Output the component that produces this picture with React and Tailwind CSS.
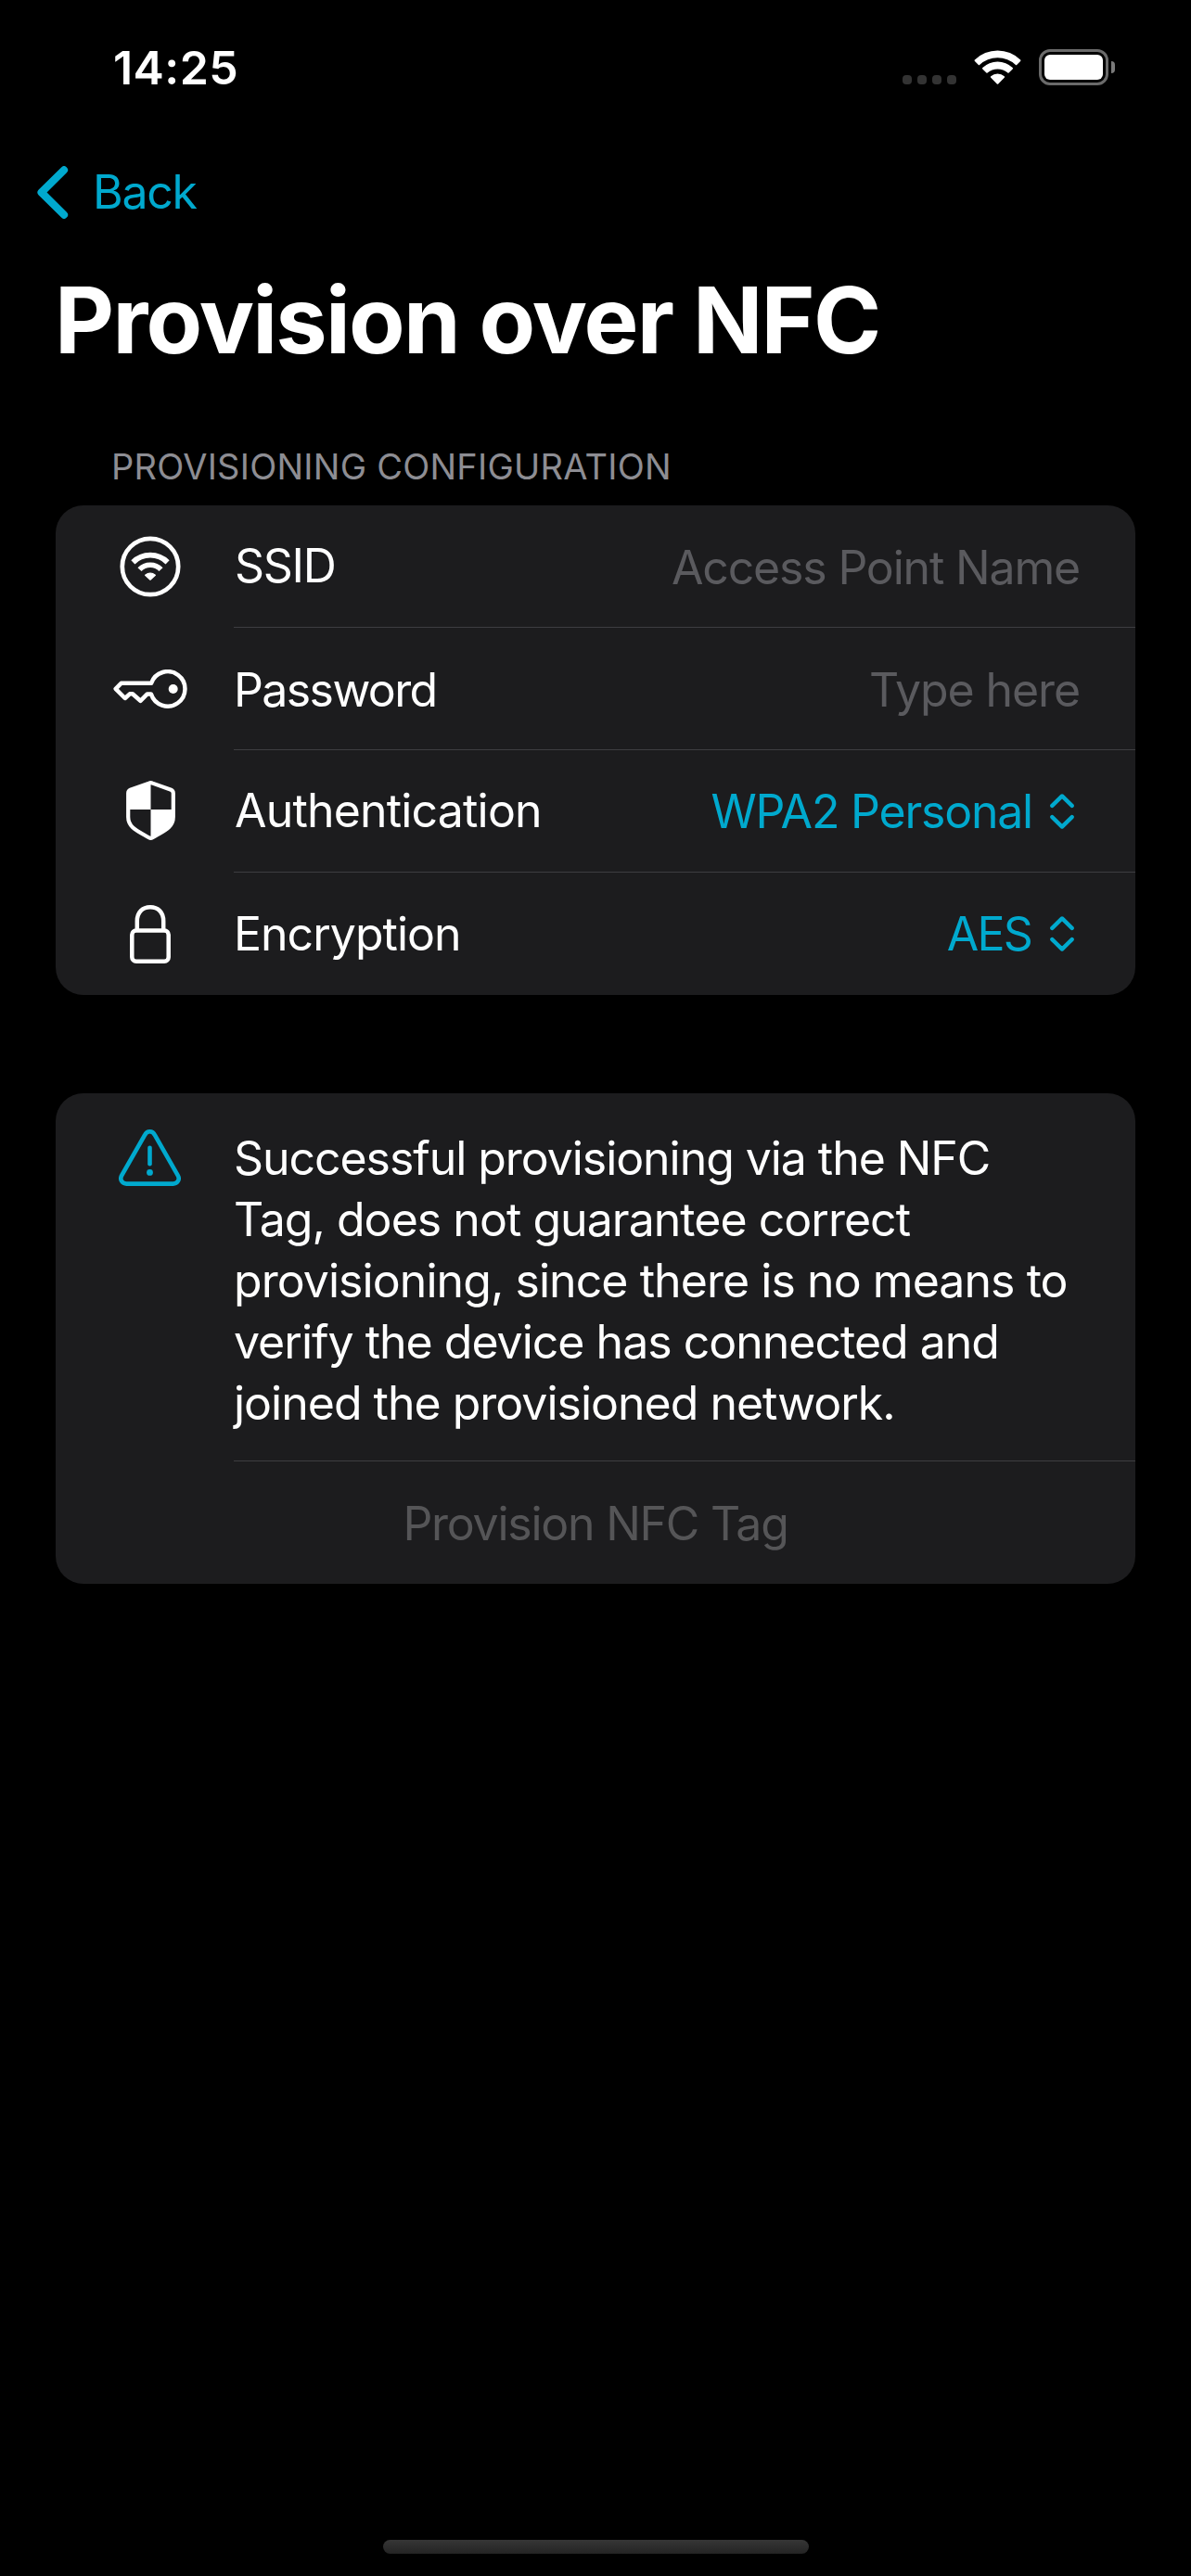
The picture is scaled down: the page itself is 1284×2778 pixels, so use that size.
import React from "react";

const CYAN = "#00a9ce";

function StatusBar() {
  return (
    <header className="flex h-[141px] shrink-0 pl-[122px] pr-[82px]">
      <div className="mt-[43px] h-[60px] text-[50px] font-semibold leading-[60px] tracking-[0.44px]">14:25</div>
      <div className="ml-auto mt-[53px] flex h-[39px]">
        <div className="mt-[28px] flex gap-[6px]">
          {[0, 1, 2, 3].map((i) => (
            <span key={i} className="size-[10px] rounded-[4px] bg-[#333333]" />
          ))}
        </div>
        <svg className="ml-[19px] mt-px h-[38px] w-[52px]" viewBox="0 0 52 38" fill="#fff">
          <path d="M0.9 10.5A35 35 0 0 1 50.1 10.5Q50.8 11.2 50.1 11.9L46.1 15.9Q45.6 16.4 45 15.9A28.6 28.6 0 0 0 6 15.9Q5.4 16.4 4.9 15.9L0.9 11.9Q0.2 11.2 0.9 10.5Z" />
          <path d="M9.3 19A23.5 23.5 0 0 1 41.7 19Q42.4 19.7 41.7 20.4L37.6 24.6Q37 25.1 36.4 24.6A16.5 16.5 0 0 0 14.6 24.6Q14 25.1 13.4 24.6L9.3 20.4Q8.6 19.7 9.3 19Z" />
          <path d="M18.2 28.3A11 11 0 0 1 32.8 28.3Q33.5 29 32.8 29.7L26.2 36.5Q25.5 37.1 24.8 36.5L18.2 29.7Q17.5 29 18.2 28.3Z" />
        </svg>
        <div className="ml-[18px] h-[39px] w-[75px] rounded-[12px] border-[3px] border-[#6a6a6a] p-[3px]">
          <div className="h-full w-full rounded-[6px] bg-white" />
        </div>
        <div className="ml-[3px] mt-[13px] h-[13px] w-[4px] rounded-r-full bg-[#7a7a7a]" />
      </div>
    </header>
  );
}

function WifiCircle() {
  return (
    <svg className="size-[66px]" viewBox="-33 -33 66 66" fill="none" stroke="#fff">
      <circle r="30.2" strokeWidth="4.7" />
      <path d="M-18.6 -4.6A26.3 26.3 0 0 1 18.6 -4.6" strokeWidth="5.8" />
      <path d="M-11.5 3.2A15.8 15.8 0 0 1 11.5 3.2" strokeWidth="5.6" />
      <path d="M-5.4 9.2Q0 4.8 5.4 9.2L0 14.2Z" fill="#fff" strokeWidth="1.2" strokeLinejoin="round" />
    </svg>
  );
}

function Key() {
  return (
    <svg className="h-[42px] w-[80px]" viewBox="0 0 80 42" fill="none" stroke="#fff" strokeWidth="4.5" strokeLinejoin="round">
      <path d="M41.1 14.8H8.6L2.7 20.8L12.8 31L17.9 26.3H20.9L29.4 33.8L36.8 26.4H40.9A18.7 18.7 0 1 0 41.1 14.8Z" />
      <circle cx="64.7" cy="21" r="5" fill="#fff" stroke="none" />
    </svg>
  );
}

function Shield() {
  return (
    <svg className="mb-[2px] h-[64px] w-[53px]" viewBox="0 0 53 64">
      <path d="M26.5 2Q25.5 2 24.5 2.6L4.6 9.8Q2.2 10.8 2.2 13.5V31H26.5Z" fill="#fff" />
      <path d="M26.5 31H50.8V39C50.8 50 42 53.5 28.5 61.2Q27.5 62 26.5 62Z" fill="#fff" />
      <path
        d="M26.5 2.1Q25.6 2.1 24.5 2.6L4.6 9.8Q2.2 10.8 2.2 13.5V39C2.2 50 11 53.5 24.5 61.2Q26.5 62.4 28.5 61.2C42 53.5 50.8 50 50.8 39V13.5Q50.8 10.8 48.4 9.8L28.5 2.6Q27.4 2.1 26.5 2.1Z"
        fill="none"
        stroke="#fff"
        strokeWidth="4.2"
      />
    </svg>
  );
}

function Lock() {
  return (
    <svg className="mt-[2px] h-[64px] w-[44px]" viewBox="0 0 44 64" fill="none" stroke="#fff" strokeWidth="4.5">
      <rect x="2.3" y="27.4" width="39.4" height="33.4" rx="4.5" />
      <path d="M7.8 27V17.5C7.8 7.5 13.8 2.3 22 2.3S36.2 7.5 36.2 17.5V27" />
    </svg>
  );
}

function Warning() {
  return (
    <svg className="mr-[2px] h-[61px] w-[67px]" viewBox="0 0 67 61" fill="none" stroke={CYAN} strokeWidth="4.6">
      <path d="M28 6.2C30.4 1 36.6 1 39 6.2L63.6 49.3C66.4 54 63.4 58.6 58.6 58.6H8.4C3.6 58.6 0.6 54 3.4 49.3Z" />
      <path d="M33.5 19.7V37.2" strokeLinecap="round" />
      <circle cx="33.5" cy="46.4" r="3.4" fill={CYAN} stroke="none" />
    </svg>
  );
}

function UpDown() {
  return (
    <svg className="mr-[6px] h-[38px] w-[26px]" viewBox="0 0 26 38" fill="none" stroke={CYAN} strokeWidth="4.3" strokeLinecap="round" strokeLinejoin="round">
      <path d="M2.3 12.9L13 2.4L23.7 12.9M2.3 25.1L13 35.6L23.7 25.1" />
    </svg>
  );
}

function Row({ icon, label, labelClass, last, children }) {
  return (
    <div className="flex h-[132px] items-center">
      <div className="ml-[42px] mr-[30px] flex w-[120px] justify-center">{icon}</div>
      <div className={`flex h-full flex-1 items-center justify-between pr-[60px] ${last ? "" : "border-b border-[#3d3d41]"}`}>
        <span className={labelClass}>{label}</span>
        {children}
      </div>
    </div>
  );
}

export default function App() {
  return (
    <div className="flex h-[2778px] w-[1284px] flex-col overflow-hidden bg-black font-['Inter',sans-serif] text-[50px] leading-[60px] text-white">
      <StatusBar />

      <nav className="flex h-[132px] shrink-0 items-center pl-[40px] text-[#00a9ce]">
        <svg className="h-[57px] w-[34px]" viewBox="0 0 34 57" fill="none" stroke={CYAN} strokeWidth="8.2" strokeLinecap="round" strokeLinejoin="round">
          <path d="M29 4.3L4.6 28.5L29 52.7" />
        </svg>
        <span className="ml-[26px] tracking-[-1.3px]">Back</span>
      </nav>

      <h1 className="ml-[59px] mt-[12px] text-[99px] font-bold leading-[120px] tracking-[-1.77px]">Provision over NFC</h1>

      <main className="mt-[73px] px-[60px]">
        <h2 className="pl-[60px] text-[38px] leading-[50px] tracking-[0.24px] text-[#8d8d93]">PROVISIONING CONFIGURATION</h2>

        <section className="mt-[17px] rounded-[30px] bg-[#1c1c1e]">
          <Row icon={<WifiCircle />} label="SSID" labelClass="pb-[2px] pl-px tracking-[-1.3px]">
            <span className="pt-[2px] tracking-[-1.18px] text-[#5a5a5e]">Access Point Name</span>
          </Row>
          <Row icon={<Key />} label="Password" labelClass="pt-[2px] tracking-[-1.6px]">
            <span className="pt-[2px] tracking-[-1.1px] text-[#5a5a5e]">Type here</span>
          </Row>
          <Row icon={<Shield />} label="Authentication" labelClass="pb-[2px] pl-px tracking-[-0.82px]">
            <span className="flex items-center gap-[19px] tracking-[-1.22px] text-[#00a9ce]">
              WPA2 Personal
              <UpDown />
            </span>
          </Row>
          <Row icon={<Lock />} label="Encryption" labelClass="tracking-[-0.99px]" last>
            <span className="flex items-center gap-[20px] tracking-[-1.78px] text-[#00a9ce]">
              AES
              <UpDown />
            </span>
          </Row>
        </section>

        <section className="mt-[106px] rounded-[30px] bg-[#1c1c1e]">
          <div className="flex h-[397px]">
            <div className="ml-[42px] mr-[30px] mt-[39px] flex w-[120px] justify-center">
              <Warning />
            </div>
            <p className="flex-1 border-b border-[#3d3d41] pt-[37px] leading-[66px] tracking-[-1px]">
              <span className="tracking-[-1.06px]">Successful provisioning via the NFC</span>
              <br />
              <span className="tracking-[-0.97px]">Tag, does not guarantee correct</span>
              <br />
              <span className="tracking-[-0.94px]">provisioning, since there is no means to</span>
              <br />
              verify the device has connected and
              <br />
              joined the provisioned network.
            </p>
          </div>
          <div className="flex h-[132px] items-center justify-center pt-[2px] tracking-[-1.25px] text-[#555557]">Provision NFC Tag</div>
        </section>
      </main>

      <footer className="mt-auto flex justify-center pb-[24px] pl-px">
        <div className="h-[15px] w-[459px] rounded-full bg-linear-to-b from-[#363636] to-[#242424]" />
      </footer>
    </div>
  );
}
